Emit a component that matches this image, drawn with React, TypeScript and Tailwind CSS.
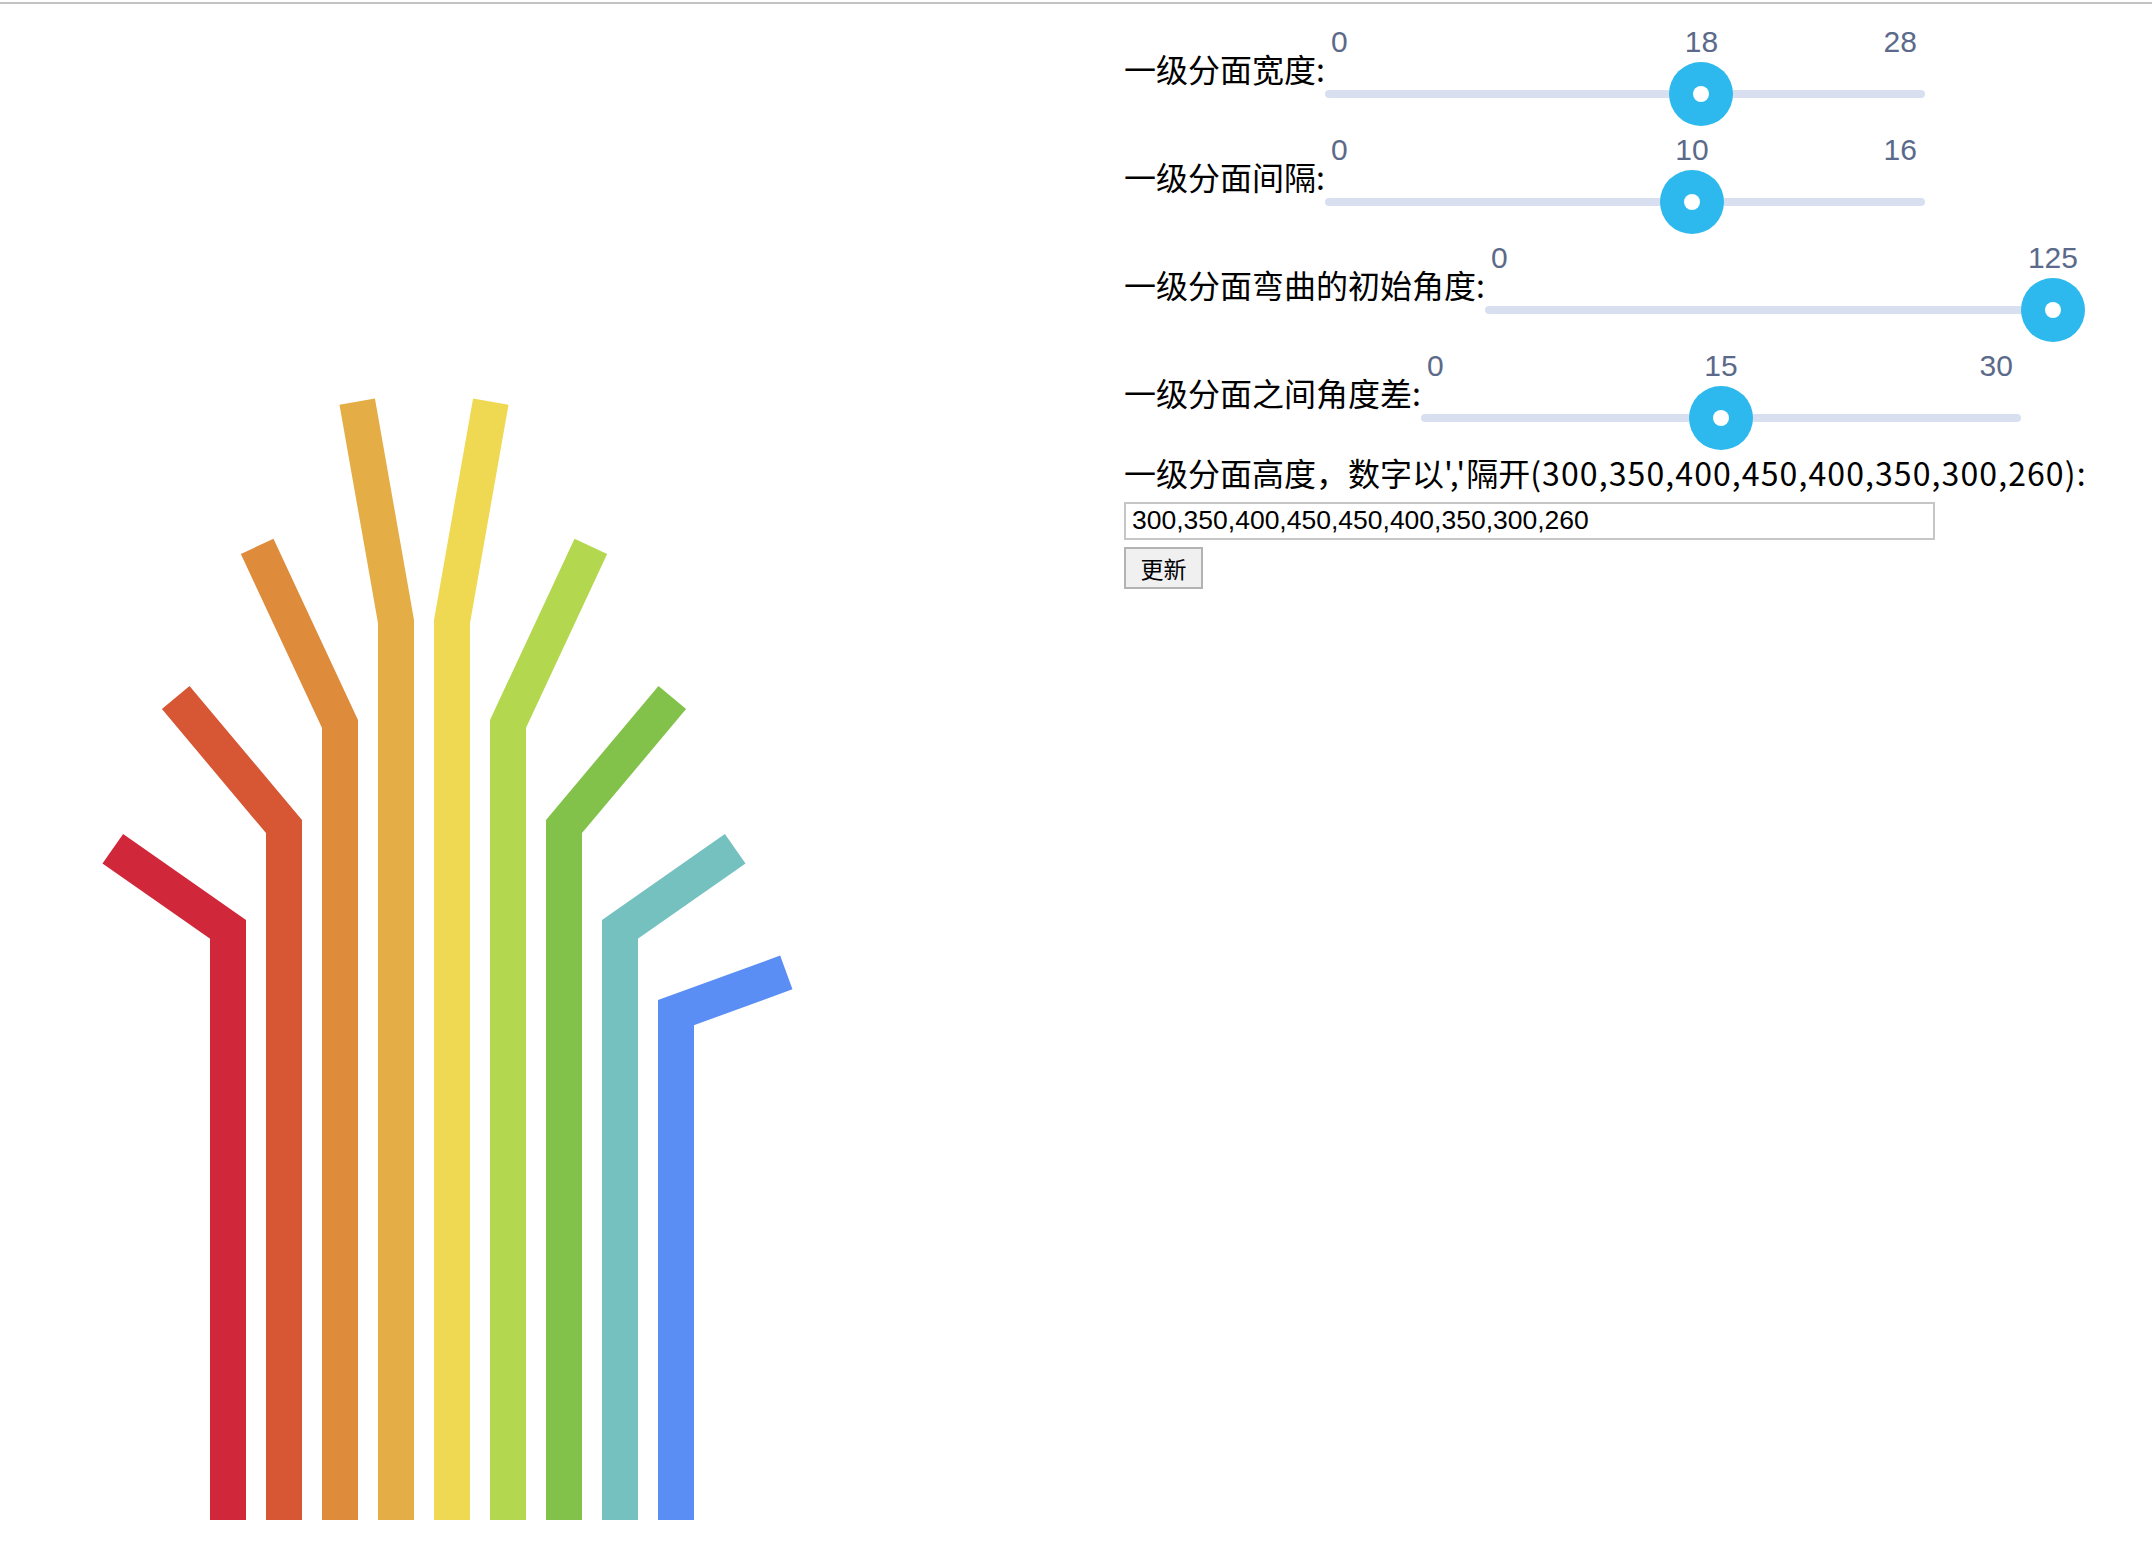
import { useState } from 'react';

interface SliderSpec {
  label: string;
  min: number;
  max: number;
  value: number;
}

const initialSliders: SliderSpec[] = [
  { label: '一级分面宽度:', min: 0, max: 28, value: 18 },
  { label: '一级分面间隔:', min: 0, max: 16, value: 10 },
  { label: '一级分面弯曲的初始角度:', min: 0, max: 125, value: 125 },
  { label: '一级分面之间角度差:', min: 0, max: 30, value: 15 },
];

const colors = ['#d0283a', '#d75633', '#de8b3b', '#e4ad45', '#efd952', '#b3d84f', '#82c24a', '#74c1c0', '#5b8ef5'];

const TRACK_W = 600;
const THUMB = 64;

function Slider({ spec, onChange }: { spec: SliderSpec; onChange: (v: number) => void }) {
  const pct = (spec.value - spec.min) / (spec.max - spec.min);
  const left = pct * (TRACK_W - THUMB);
  return (
    <div
      className="relative w-[600px] h-[108px] select-none"
      onClick={(e) => {
        const r = e.currentTarget.getBoundingClientRect();
        const p = Math.min(1, Math.max(0, (e.clientX - r.left - THUMB / 2) / (TRACK_W - THUMB)));
        onChange(Math.round(spec.min + p * (spec.max - spec.min)));
      }}
    >
      <span className="absolute top-[23px] left-[6px] text-[30px] leading-[30px] text-[#5b6a8a] font-['Liberation_Sans',Arial,sans-serif]">
        {spec.min}
      </span>
      {spec.value !== spec.max && (
        <span className="absolute top-[23px] right-[8px] text-[30px] leading-[30px] text-[#5b6a8a] font-['Liberation_Sans',Arial,sans-serif]">
          {spec.max}
        </span>
      )}
      <span
        className="absolute top-[23px] -translate-x-1/2 text-[30px] leading-[30px] text-[#5b6a8a] font-['Liberation_Sans',Arial,sans-serif]"
        style={{ left: left + THUMB / 2 }}
      >
        {spec.value}
      </span>
      <div className="absolute top-[86px] left-0 right-0 h-[8px] rounded-full bg-[#d8dff0]" />
      <div
        className="absolute top-[58px] w-[64px] h-[64px] rounded-full bg-[#2db9ee] flex items-center justify-center"
        style={{ left }}
      >
        <div className="w-4 h-4 rounded-full bg-white" />
      </div>
    </div>
  );
}

function Chart({ heights, width, gap, diff }: { heights: number[]; width: number; gap: number; diff: number }) {
  const bottom = 1516;
  const w = width * 2;
  const pitch = (width + gap) * 2;
  const mid = (heights.length - 2) / 2;
  return (
    <svg width="1124" height="1550" className="block shrink-0">
      {heights.map((hv, i) => {
        const h = hv * 2;
        const cx = 228 + pitch * i;
        const theta = 2.5 + diff * Math.abs(i - mid);
        const dir = i <= Math.floor(mid) ? -1 : 1;
        const rad = (theta * Math.PI) / 180;
        const corr = (w / 2) * Math.tan(rad / 2);
        const py = bottom - (h - corr);
        const len = h / 4 - corr;
        const tx = cx + dir * len * Math.sin(rad);
        const ty = py - len * Math.cos(rad);
        return (
          <polyline
            key={i}
            points={`${cx},${bottom} ${cx},${py} ${tx},${ty}`}
            fill="none"
            stroke={colors[i % colors.length]}
            strokeWidth={w}
            strokeLinejoin="miter"
            strokeLinecap="butt"
          />
        );
      })}
    </svg>
  );
}

export default function App() {
  const [sliders, setSliders] = useState(initialSliders);
  const [text, setText] = useState('300,350,400,450,450,400,350,300,260');
  const [heights, setHeights] = useState(text.split(',').map(Number));

  return (
    <div className="w-[2152px] h-[1554px] bg-white overflow-hidden font-['Noto_Sans_CJK_SC',sans-serif] text-black">
      <div className="h-[2px] mt-[2px] bg-[#c2c2c2]" />
      <div className="flex">
        <Chart heights={heights} width={sliders[0].value} gap={sliders[1].value} diff={sliders[3].value} />

        {/* 控制面板 */}
        <div className="flex flex-col">
          {sliders.map((s, idx) => (
            <div key={s.label} className="flex h-[108px]">
              <span className="mt-[44px] text-[32px] leading-[40px] whitespace-nowrap">{s.label}</span>
              <Slider
                spec={s}
                onChange={(v) => setSliders(sliders.map((x, j) => (j === idx ? { ...x, value: v } : x)))}
              />
            </div>
          ))}
          <p className="mt-[16px] mb-[3px] text-[32px] leading-[40px] whitespace-nowrap">
            一级分面高度，数字以<span className="tracking-[1px]">{"','"}</span>隔开
            <span className="tracking-[1.1px]">(300,350,400,450,400,350,300,260):</span>
          </p>
          <input
            className="mt-[7px] w-[811px] h-[38px] px-[6px] border-2 border-[#c6c6c6] text-[26.5px] font-['Liberation_Sans',Arial,sans-serif] outline-none"
            value={text}
            onChange={(e) => setText(e.target.value)}
          />
          <button
            className="mt-[7px] w-[79px] h-[42px] border-2 border-[#b3b3b3] bg-[#f0f0f0] text-[23px] leading-none"
            onClick={() => setHeights(text.split(',').map(Number).filter((n) => !isNaN(n)))}
          >
            更新
          </button>
        </div>
      </div>
    </div>
  );
}
